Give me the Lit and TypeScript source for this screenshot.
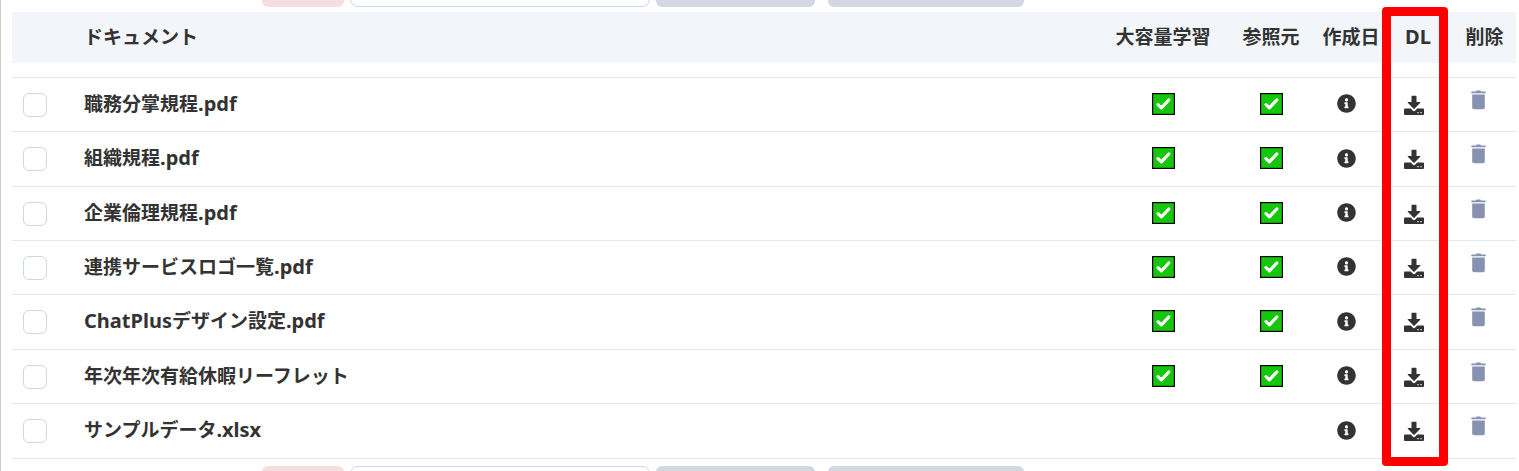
import { LitElement, html, css, svg } from "lit";
import { customElement, property } from "lit/decorators.js";

interface DocumentRow {
  name: string;
  learned: boolean;
  source: boolean;
}

const DOCUMENTS: DocumentRow[] = [
  { name: "職務分掌規程.pdf", learned: true, source: true },
  { name: "組織規程.pdf", learned: true, source: true },
  { name: "企業倫理規程.pdf", learned: true, source: true },
  { name: "連携サービスロゴ一覧.pdf", learned: true, source: true },
  { name: "ChatPlusデザイン設定.pdf", learned: true, source: true },
  { name: "年次年次有給休暇リーフレット", learned: true, source: true },
  { name: "サンプルデータ.xlsx", learned: false, source: false },
];

// Latin runs are set one step larger than the Japanese around them.
const mixed = (text: string) =>
  text
    .split(/([\x21-\x7e]+)/)
    .filter((part) => part)
    .map((part) => (/^[\x21-\x7e]/.test(part) ? html`<span class="latin">${part}</span>` : part));

const checkMark = html`<svg class="icon" role="img" aria-label="有効" width="23" height="22" viewBox="0 0 23 22">
  ${svg`<rect x="0.6" y="0.6" width="21.800" height="20.800" fill="#16c60c" stroke="#000" stroke-width="1.2"/>
  <path d="M6 11.600l3.400 3.200 7.400-7.800" fill="none" stroke="#fff" stroke-width="3.200" stroke-linecap="round" stroke-linejoin="round"/>`}
</svg>`;

const infoIcon = html`<svg class="icon" aria-hidden="true" width="19" height="19" viewBox="2 2 508 508">
  ${svg`<path fill="#333" d="M256 8C119 8 8 119 8 256s111 248 248 248 248-111 248-248S393 8 256 8zm0 110c23.200 0 42 18.800 42 42s-18.800 42-42 42-42-18.800-42-42 18.800-42 42-42zm56 254c0 6.600-5.400 12-12 12h-88c-6.600 0-12-5.400-12-12v-24c0-6.600 5.400-12 12-12h12v-64h-12c-6.600 0-12-5.400-12-12v-24c0-6.600 5.400-12 12-12h64c6.600 0 12 5.400 12 12v100h12c6.600 0 12 5.400 12 12z"/>`}
</svg>`;

const downloadIcon = html`<svg class="icon" aria-hidden="true" width="20" height="20" viewBox="0 0 20 20">
  ${svg`<path fill="#333" d="M8 0.800h4a.5.5 0 0 1 .5.5V7h3.400a.5.5 0 0 1 .350.850l-5.900 5.900a.5.5 0 0 1-.7 0l-5.900-5.900A.5.5 0 0 1 4.100 7h3.400V1.300A.5.5 0 0 1 8 .8z"/>
  <path fill="#333" fill-rule="evenodd" d="M1 13.600h5.800l1.900 1.900a1.850 1.850 0 0 0 2.600 0l1.900-1.900H19a1 1 0 0 1 1 1V19a1 1 0 0 1-1 1H1a1 1 0 0 1-1-1v-4.400a1 1 0 0 1 1-1zM13.400 17.100v1.200h1.200v-1.200zM16.400 17.100v1.200h1.200v-1.200z"/>`}
</svg>`;

const trashIcon = html`<svg class="icon" aria-hidden="true" width="15" height="20" viewBox="0 0 15 20">
  ${svg`<path fill="#8792b0" d="M4.800 1.500L5.700.5h3.600l.9 1h3.600c.6 0 1 .4 1 .9s-.4.900-1 .9H1.200c-.6 0-1-.4-1-.9s.4-.9 1-.9z"/>
  <path fill="#8792b0" d="M1.200 4.500h12.600v13a1.800 1.800 0 0 1-1.800 1.800H3a1.800 1.800 0 0 1-1.800-1.800z"/>`}
</svg>`;

@customElement("action-bar")
export class ActionBar extends LitElement {
  @property({ reflect: true }) edge: "top" | "bottom" = "top";

  static styles = css`
    :host {
      display: flex;
      overflow: hidden;
      gap: 6px;
      padding-left: 250px;
      align-items: flex-end;
    }
    :host([edge="bottom"]) {
      align-items: flex-start;
    }
    button,
    input {
      flex: none;
      box-sizing: border-box;
      height: 40px;
      margin: 0;
      padding: 0 12px;
      border: 0;
      border-radius: 6px;
      font: 16px "Noto Sans", "Noto Sans CJK JP", sans-serif;
    }
    .remove {
      width: 82px;
      background: #f6dddf;
    }
    .field {
      width: 300px;
      border: 1px solid #cbd7ec;
      border-radius: 8px;
      background: #fff;
    }
    .apply {
      width: 159px;
      background: #d3d7e2;
    }
    .extra {
      width: 196px;
      margin-left: 7px;
      background: #d3d7e2;
    }
  `;

  render() {
    return html`
      <button class="remove" type="button" aria-label="削除"></button>
      <input class="field" type="text" aria-label="フォルダ" />
      <button class="apply" type="button" aria-label="適用"></button>
      <button class="extra" type="button" aria-label="一括設定"></button>
    `;
  }
}

@customElement("document-table")
export class DocumentTable extends LitElement {
  @property({ attribute: false }) rows: DocumentRow[] = [];

  static styles = css`
    :host {
      display: block;
      position: relative;
      color: #333;
      font: bold 19px/28px "Noto Sans CJK JP", sans-serif;
    }
    table {
      width: 100%;
      table-layout: fixed;
      border-collapse: separate;
      border-spacing: 0;
    }
    .c-select {
      width: 72px;
    }
    .c-learn {
      width: 120px;
    }
    .c-source {
      width: 96px;
    }
    .c-date {
      width: 64px;
    }
    .c-dl {
      width: 70px;
    }
    .c-delete {
      width: 63px;
    }
    th,
    td {
      box-sizing: border-box;
      padding: 0 0 4px;
      text-align: center;
      vertical-align: middle;
      white-space: nowrap;
      font-weight: bold;
    }
    td {
      padding-bottom: 2px;
    }
    thead th {
      height: 51px;
      background: #f2f5fa;
    }
    thead .name,
    tbody .name {
      text-align: left;
    }
    tbody th,
    tbody td {
      height: 54px;
      border-bottom: 1px solid #e3e8f3;
    }
    tbody tr:nth-child(3n + 2) > *,
    tbody tr:last-child > * {
      height: 55px;
    }
    .lead td {
      height: 15px;
      border-bottom: 1px solid #e3e8f3;
    }
    .latin {
      font-family: "Noto Sans", sans-serif;
      font-size: 20px;
      line-height: 20px;
    }
    .select {
      padding-left: 11px;
      padding-bottom: 0;
      text-align: left;
    }
    input {
      display: block;
      appearance: none;
      box-sizing: border-box;
      width: 24px;
      height: 24px;
      margin: 0;
      border: 1px solid #cbd7ec;
      border-radius: 6px;
      background: #fff;
    }
    button,
    a {
      display: block;
      width: fit-content;
      margin: 0 auto;
      padding: 0;
      border: 0;
      background: none;
      cursor: pointer;
    }
    .icon {
      display: block;
      margin: 0 auto;
    }
    .date {
      padding-right: 10px;
    }
    .dl {
      padding-right: 8px;
      padding-bottom: 0;
    }
    .delete {
      padding-right: 12px;
      padding-bottom: 10px;
    }
    .highlight {
      position: absolute;
      top: -5px;
      right: 68px;
      bottom: -7px;
      box-sizing: border-box;
      width: 66px;
      border: 9px solid #f00;
      border-radius: 4px;
      pointer-events: none;
    }
  `;

  render() {
    return html`
      <table>
        <colgroup>
          <col class="c-select" />
          <col />
          <col class="c-learn" />
          <col class="c-source" />
          <col class="c-date" />
          <col class="c-dl" />
          <col class="c-delete" />
        </colgroup>
        <thead>
          <tr>
            <th></th>
            <th class="name" scope="col">ドキュメント</th>
            <th scope="col">大容量学習</th>
            <th scope="col">参照元</th>
            <th scope="col">作成日</th>
            <th scope="col">${mixed("DL")}</th>
            <th scope="col">削除</th>
          </tr>
          <tr class="lead">
            <td colspan="7"></td>
          </tr>
        </thead>
        <tbody>
          ${this.rows.map(
            (row, i) => html`<tr>
              <td class="select"><input type="checkbox" aria-labelledby="doc-${i}" /></td>
              <th class="name" scope="row" id="doc-${i}">${mixed(row.name)}</th>
              <td>${row.learned ? checkMark : ""}</td>
              <td>${row.source ? checkMark : ""}</td>
              <td class="date"><button type="button" aria-label="作成日">${infoIcon}</button></td>
              <td class="dl"><a href="#" aria-label="ダウンロード">${downloadIcon}</a></td>
              <td class="delete"><button type="button" aria-label="削除">${trashIcon}</button></td>
            </tr>`
          )}
        </tbody>
      </table>
      <div class="highlight"></div>
    `;
  }
}

@customElement("app-root")
export class AppRoot extends LitElement {
  static styles = css`
    :host {
      display: flex;
      flex-direction: column;
      box-sizing: border-box;
      height: 100vh;
      overflow: hidden;
      padding: 0 3px 0 11px;
      border-left: 1px solid #ccc;
      background: #fff;
    }
    .top {
      flex: none;
      height: 7px;
      margin-bottom: 5px;
    }
    document-table {
      flex: none;
    }
    .bottom {
      flex: 1;
      min-height: 0;
      margin-top: 7px;
    }
  `;

  render() {
    return html`
      <action-bar class="top" edge="top"></action-bar>
      <document-table .rows=${DOCUMENTS}></document-table>
      <action-bar class="bottom" edge="bottom"></action-bar>
    `;
  }
}
